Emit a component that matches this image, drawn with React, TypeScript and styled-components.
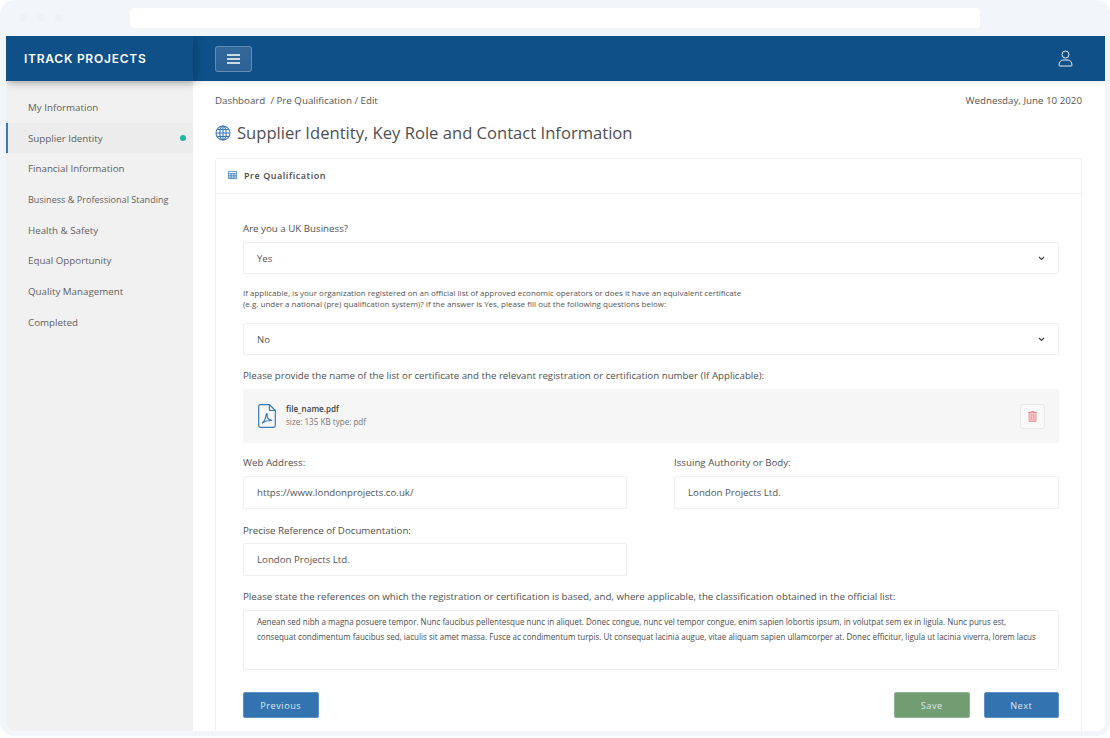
import React from "react";
import styled, { createGlobalStyle } from "styled-components";

const Global = createGlobalStyle`
  html, body { margin: 0; padding: 0; background: #fff; }
  body { font-family: "Open Sans", "Liberation Sans", sans-serif; color: #4a4a4a; }
  * { box-sizing: border-box; }
`;

const Frame = styled.div`
  width: 1110px; height: 736px; background: #f2f6fa; border-radius: 14px;
  padding: 8px 5px 5px 6px; display: flex; flex-direction: column; overflow: hidden;
`;
const Chrome = styled.div`
  height: 28px; flex: none; display: flex; align-items: flex-start; padding-left: 13px;
`;
const Dots = styled.div`
  display: flex; gap: 10px; margin-top: 6px; width: 111px; flex: none;
`;
const Dot = styled.span`
  width: 8px; height: 8px; border-radius: 50%; background: #eef2f6;
`;
const Url = styled.div`
  width: 850px; height: 20px; background: #fff; border-radius: 4px;
`;
const Win = styled.div`
  flex: 1; display: flex; flex-direction: column; background: #fff; border-radius: 0 0 8px 8px; overflow: hidden; min-height: 0;
`;
const Header = styled.header`
  height: 45px; flex: none; background: #0e5087; display: flex; align-items: center; position: relative; z-index: 2;
  box-shadow: 0 2px 6px rgba(0,0,0,.08);
`;
const Brand = styled.div`
  width: 187px; height: 45px; flex: none; display: flex; align-items: center; padding-left: 18px;
  color: #fff; font: 600 12px Inter, "Liberation Sans", sans-serif; letter-spacing: .75px;
  box-shadow: 2px 2px 8px rgba(0,0,0,.25);
`;
const Toggle = styled.button`
  margin-left: 22px; width: 37px; height: 26px; border-radius: 3px; border: 1px solid rgba(255,255,255,.25);
  background: linear-gradient(#33689a, #2c6295); display: flex; align-items: center; justify-content: center; padding: 0; color: #fff;
`;
const UserBtn = styled.div`
  margin-left: auto; margin-right: 32px; display: flex; color: #e8eef4;
`;
const Body = styled.div`
  flex: 1; display: flex; min-height: 0;
`;
const Side = styled.nav`
  width: 187px; flex: none; background: #f1f1f1; padding-top: 11px; border-bottom-left-radius: 8px;
`;
const Item = styled.div<{ $active?: boolean; $small?: boolean }>`
  height: 30.7px; display: flex; align-items: center; justify-content: space-between;
  padding: 0 7px 0 ${p => (p.$active ? "20px" : "22px")}; font-size: ${p => (p.$small ? "9.1px" : "9.75px")}; color: #626262;
  ${p => p.$active && "background: #ececec; border-left: 2px solid #3a7ab5;"}
`;
const Mark = styled.span`
  width: 6px; height: 6px; border-radius: 50%; background: #1fb5a0;
`;
const Main = styled.main`
  flex: 1; padding: 0 23px 0 22px; min-width: 0; display: flex; flex-direction: column;
`;
const Crumbs = styled.div`
  display: flex; justify-content: space-between; font-size: 9.75px; color: #555; height: 14px; margin-top: 13px; line-height: 14px;
`;
const Title = styled.h1`
  margin: 13px 0 0; display: flex; align-items: center; gap: 6px; font-size: 16.6px; font-weight: 400; color: #4f4f4f; height: 24px; line-height: 24px;
`;
const Card = styled.section`
  margin-top: 13px; flex: 1; border: 1px solid #f0f0f0; border-bottom: 0; border-radius: 3px 3px 0 0; display: flex; flex-direction: column;
`;
const CardHead = styled.div`
  height: 35px; flex: none; border-bottom: 1px solid #efefef; display: flex; align-items: center; gap: 7px; padding: 0 0 2px 12px;
  font-size: 9px; font-weight: 600; letter-spacing: .55px; color: #4b4b4b;
`;
const CardBody = styled.div`
  padding: 28px 22px 0 27px; display: flex; flex-direction: column;
`;
const Label = styled.div`
  font-size: 9.72px; line-height: 14px; color: #505050; height: 14px;
`;
const Select = styled.div<{ $top?: number }>`
  height: 32px; margin-top: ${p => p.$top ?? 6}px; border: 1px solid #eeeeee; border-radius: 2px; display: flex; align-items: center; justify-content: space-between;
  padding: 0 13px 0 13px; font-size: 9.5px; color: #555;
`;
const Note = styled.p`
  margin: 13px 0 0; font-size: 8px; line-height: 11px; color: #555;
`;
const Spaced = styled.div<{ $top: number }>`
  margin-top: ${p => p.$top}px;
`;
const FileBox = styled.div`
  margin-top: 6px; height: 54px; background: #f6f6f6; display: flex; align-items: center; padding: 0 14px 0 15px; gap: 10px;
`;
const FileInfo = styled.div`
  flex: 1; display: flex; flex-direction: column; gap: 2px; padding-bottom: 2px;
`;
const FileName = styled.div`
  font-size: 8.1px; font-weight: 600; color: #444; line-height: 11px;
`;
const FileMeta = styled.div`
  font-size: 8.1px; color: #777; line-height: 11px;
`;
const Trash = styled.div`
  width: 25px; height: 25px; background: #f9f9f9; border: 1px solid #e8e8e8; border-radius: 3px; display: flex; align-items: center; justify-content: center;
`;
const TwoCol = styled.div`
  margin-top: 13px; display: grid; grid-template-columns: 384px 385px; column-gap: 47px;
`;
const Input = styled.div<{ $top?: number }>`
  height: 33px; margin-top: ${p => p.$top ?? 6}px; border: 1px solid #eeeeee; border-radius: 2px; display: flex; align-items: center; padding-left: 13px;
  font-size: 9.7px; color: #555;
`;
const Half = styled.div`
  width: 384px; margin-top: 15px;
`;
const Area = styled.div`
  margin-top: 6px; height: 60px; border: 1px solid #eeeeee; border-radius: 2px; padding: 3px 13px; font-size: 8.03px; line-height: 15px; color: #4d4d4d; white-space: nowrap; overflow: hidden;
`;
const Actions = styled.div`
  margin-top: 22px; display: flex; gap: 14px;
`;
const Btn = styled.button<{ $green?: boolean; $push?: boolean }>`
  width: 75.5px; height: 26px; border: 1px solid ${p => (p.$green ? "#8fb494" : "#5e92c2")}; border-radius: 2px; background: ${p => (p.$green ? "#729c72" : "#3373b0")};
  color: #dfe8ee; font: 400 9.1px "Open Sans", sans-serif; letter-spacing: .55px; padding: 0;
  ${p => p.$push && "margin-left: auto;"}
`;

const Chevron = () => (
  <svg width="7" height="5" viewBox="0 0 7 5" fill="none" stroke="#444" strokeWidth="1.2"><path d="M1 1l2.5 2.5L6 1" /></svg>
);

const items = ["My Information", "Supplier Identity", "Financial Information", "Business & Professional Standing", "Health & Safety", "Equal Opportunity", "Quality Management", "Completed"];

export default function App() {
  return (
    <Frame>
      <Global />
      <Chrome>
        <Dots><Dot /><Dot /><Dot /></Dots>
        <Url />
      </Chrome>
      <Win>
        <Header>
          <Brand>ITRACK PROJECTS</Brand>
          <Toggle aria-label="menu">
            <svg width="13" height="10" viewBox="0 0 13 10" stroke="#fff" strokeWidth="1.3"><path d="M0 1h13M0 5h13M0 9h13" /></svg>
          </Toggle>
          <UserBtn>
            <svg width="15" height="17" viewBox="0 0 15 17" fill="none" stroke="currentColor" strokeWidth="1"><circle cx="7.5" cy="4.5" r="3.5" /><path d="M1 15.2c0-3 1.8-5.2 4-5.2h5c2.2 0 4 2.2 4 5.2 0 .5-.3.8-.8.8H1.800c-.5 0-.8-.3-.8-.8z" /></svg>
          </UserBtn>
        </Header>
        <Body>
          <Side>
            {items.map((t, i) => (
              <Item key={t} $active={i === 1} $small={i === 3}>{t}{i === 1 && <Mark />}</Item>
            ))}
          </Side>
          <Main>
            <Crumbs><span>Dashboard &nbsp;/ Pre Qualification / Edit</span><span>Wednesday, June 10 2020</span></Crumbs>
            <Title>
              <svg width="16" height="16" viewBox="0 0 16 16" fill="none" stroke="#3a7ab5" strokeWidth="1.1"><circle cx="8" cy="8" r="7" /><ellipse cx="8" cy="8" rx="3.2" ry="7" /><path d="M1 8h14M2 4.500h12M2 11.500h12M8 1v14" /></svg>
              Supplier Identity, Key Role and Contact Information
            </Title>
            <Card>
              <CardHead>
                <svg width="9" height="8" viewBox="0 0 9 8" fill="none" stroke="#3a7ab5" strokeWidth=".8"><path d="M.4.400h8.200v7.200H.4zM.4 2.600h8.200M.4 4.300h8.200M.4 6h8.200M3.100 2.600v5M5.900 2.600v5" /></svg>
                Pre Qualification
              </CardHead>
              <CardBody>
                <Label>Are you a UK Business?</Label>
                <Select><span>Yes</span><Chevron /></Select>
                <Note>If applicable, is your organization registered on an official list of approved economic operators or does it have an equivalent certificate<br />(e.g. under a national (pre) qualification system)? If the answer is Yes, please fill out the following questions below:</Note>
                <Select $top={14}><span>No</span><Chevron /></Select>
                <Spaced $top={14}><Label>Please provide the name of the list or certificate and the relevant registration or certification number (If Applicable):</Label></Spaced>
                <FileBox>
                  <svg width="18" height="24" viewBox="0 0 18 24" fill="none" stroke="#3a7ab5" strokeWidth="1.200"><path d="M2 .7h9.500l5.800 5.800V21.500c0 1-.8 1.800-1.800 1.800H2.500c-1 0-1.800-.8-1.800-1.800V2.500C.7 1.500 1.200.7 2 .7z" /><path d="M11.500.7v5.800h5.800" /><path d="M4 19c2-1 3.500-4 4.200-8.500.3-1.200 1.200-1.200 1 .5-.3 2.500 1 5 5 5.500-3-.3-7 .3-10 2.500z" /></svg>
                  <FileInfo>
                    <FileName>file_name.pdf</FileName>
                    <FileMeta>size: 135 KB type: pdf</FileMeta>
                  </FileInfo>
                  <Trash>
                    <svg width="9" height="11" viewBox="0 0 9 11" fill="#f9c6c8" stroke="#ec8f94" strokeWidth=".9"><path d="M3 1.200V.5h3v.7M.3 1.500h8.400M1 1.500h7v9H1zM3.200 3.500v5.500M5.800 3.500v5.500" /></svg>
                  </Trash>
                </FileBox>
                <TwoCol>
                  <div><Label>Web Address:</Label><Input>https://www.londonprojects.co.uk/</Input></div>
                  <div><Label>Issuing Authority or Body:</Label><Input>London Projects Ltd.</Input></div>
                </TwoCol>
                <Half><Label>Precise Reference of Documentation:</Label><Input $top={5}>London Projects Ltd.</Input></Half>
                <Spaced $top={14}><Label>Please state the references on which the registration or certification is based, and, where applicable, the classification obtained in the official list:</Label></Spaced>
                <Area>
                  Aenean sed nibh a magna posuere tempor. Nunc faucibus pellentesque nunc in aliquet. Donec congue, nunc vel tempor congue, enim sapien lobortis ipsum, in volutpat sem ex in ligula. Nunc purus est,<br />
                  consequat condimentum faucibus sed, iaculis sit amet massa. Fusce ac condimentum turpis. Ut consequat lacinia augue, vitae aliquam sapien ullamcorper at. Donec efficitur, ligula ut lacinia viverra, lorem lacus
                </Area>
                <Actions>
                  <Btn>Previous</Btn>
                  <Btn $green $push>Save</Btn>
                  <Btn>Next</Btn>
                </Actions>
              </CardBody>
            </Card>
          </Main>
        </Body>
      </Win>
    </Frame>
  );
}
